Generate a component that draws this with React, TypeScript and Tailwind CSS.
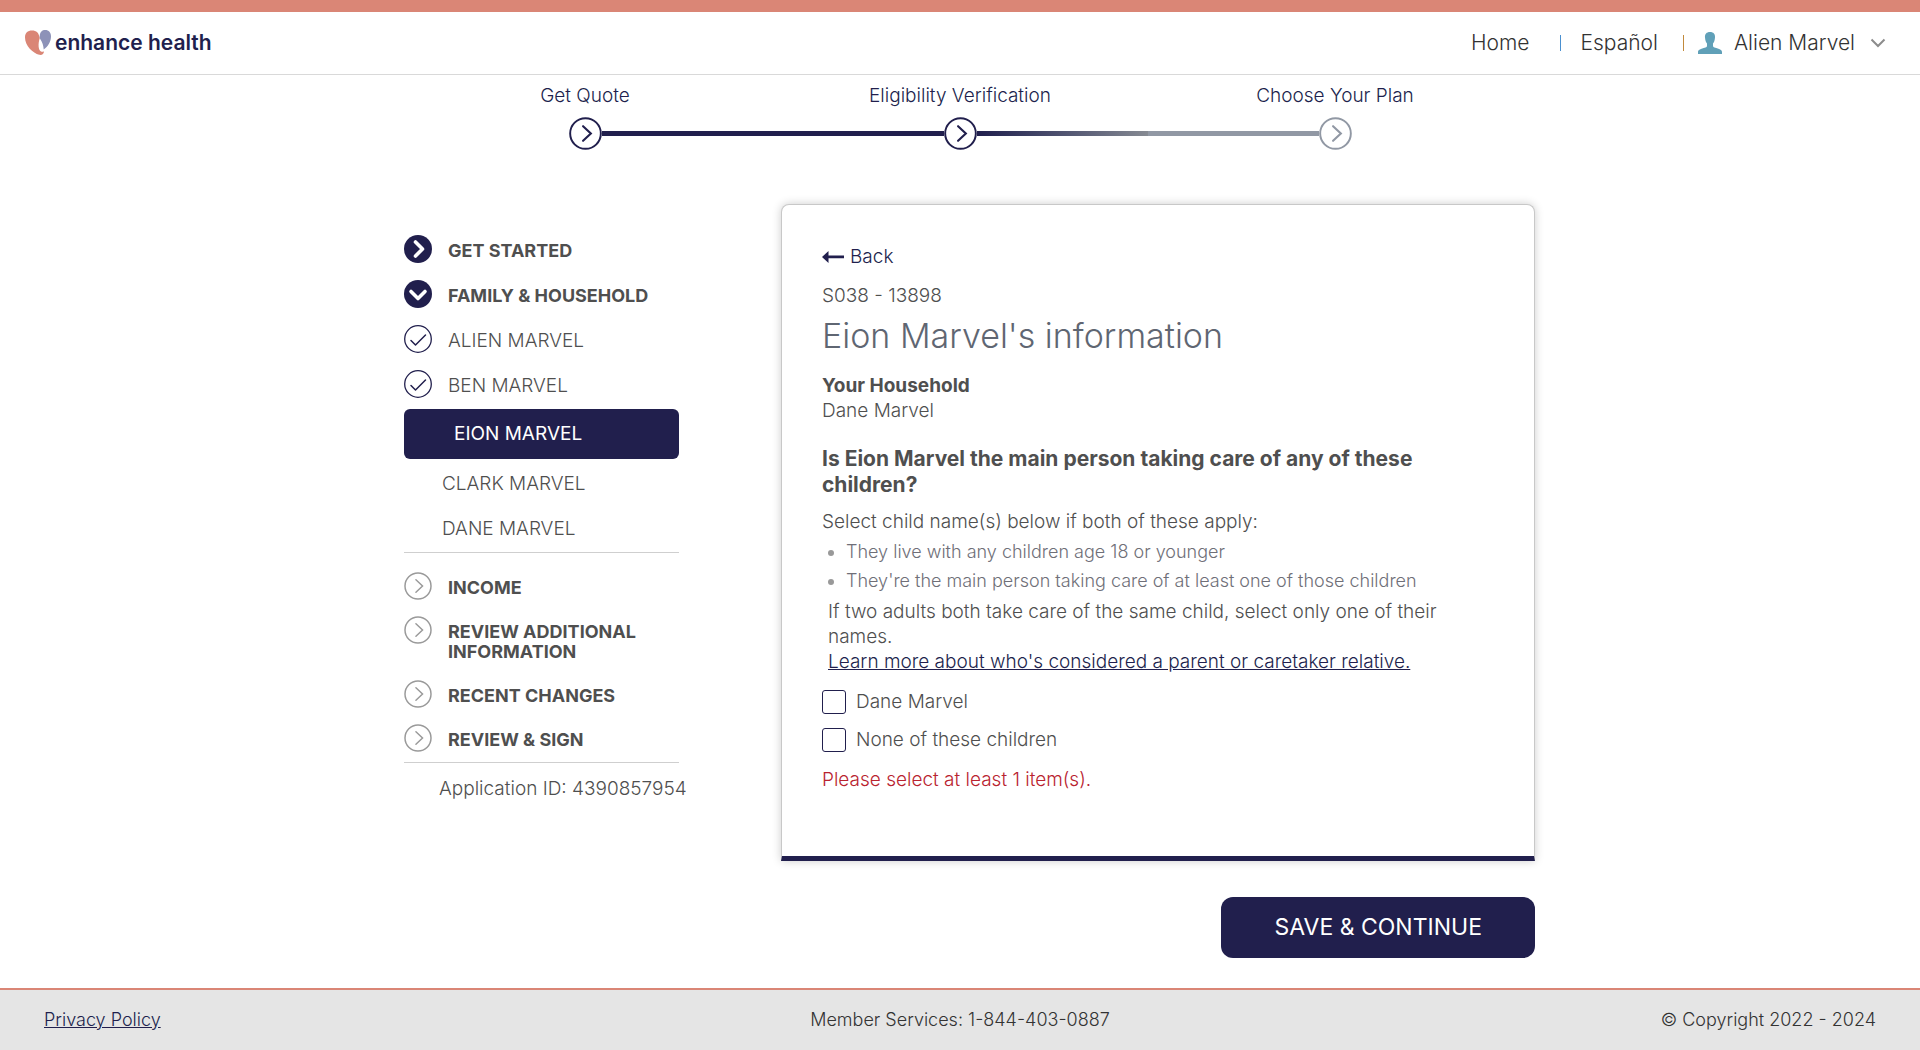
import React from "react";

const NAVY = "#211f4d";

function Logo() {
  return (
    <a href="#home" aria-label="enhance health" className="flex items-center gap-1 text-[#211f4d]">
      <svg width="26" height="26" viewBox="0 0 26 26" aria-hidden="true">
        <path
          d="M7 .6C2.600 .6 0 3 0 7.500c0 8.500 8 15.500 14.200 17.300 2.600.7 4.800-.9 4.800-3.600-.9.700-2 .8-3 .3-2.600-1.300-3.200-7.500-1.200-13.500C13.800 3 11.500.6 7 .6z"
          fill="#da8676"
        />
        <path d="M20.200 0c-3 0-5.200 2-5.400 5.500-.2 1.500 0 2.500.4 3.500 2.200 3.300 3.300 6.600 3.500 10.500C23 16.500 26 11.500 26 6.500 26 2.500 23.800 0 20.200 0z" fill="#8d92b8" />
      </svg>
      <span className="text-[21px] leading-6 font-semibold">enhance health</span>
    </a>
  );
}

function RingChevron({ size, color, bold }: { size: number; color: string; bold?: boolean }) {
  return (
    <svg width={size} height={size} viewBox="0 0 34 34" fill="none" aria-hidden="true" className="shrink-0">
      <circle cx="17" cy="17" r="15.800" stroke={color} strokeWidth={bold ? 2 : 1.800} fill="#fff" />
      <path d="M14.500 9.500l8 7.500-8 7.500" stroke={color} strokeWidth={bold ? 2.200 : 1.800} strokeLinecap="round" />
    </svg>
  );
}

function SolidChevron({ down }: { down?: boolean }) {
  return (
    <svg width="28" height="28" viewBox="0 0 28 28" fill="none" aria-hidden="true" className="shrink-0">
      <circle cx="14" cy="14" r="14" fill={NAVY} />
      <path
        d={down ? "M7 11.500l7 7 7-7" : "M11.500 7l7 7-7 7"}
        stroke="#fff"
        strokeWidth="3.600"
        strokeLinecap="round"
        strokeLinejoin="round"
      />
    </svg>
  );
}

function RingCheck() {
  return (
    <svg width="28" height="28" viewBox="0 0 28 28" fill="none" aria-hidden="true" className="shrink-0">
      <circle cx="14" cy="14" r="13.300" stroke={NAVY} strokeWidth="1.300" />
      <path d="M7 15.500l4.500 4.500L21.500 10" stroke={NAVY} strokeWidth="1.500" strokeLinecap="round" strokeLinejoin="round" />
    </svg>
  );
}

function NavRow({ icon, label, strong }: { icon: React.ReactNode; label: string; strong?: boolean }) {
  return (
    <li>
      <a href="#section" className="flex items-start gap-4 pt-1.5 pb-2.5">
        {icon}
        <span
          className={
            strong
              ? "pt-1.5 pb-0.5 text-lg leading-5 font-bold text-[#4f4f4f]"
              : "pt-1.5 pb-0.5 text-[19px] leading-5 font-light text-[#4f4f4f]"
          }
        >
          {label}
        </span>
      </a>
    </li>
  );
}

const steps = [
  { label: "Get Quote", color: NAVY },
  { label: "Eligibility Verification", color: NAVY },
  { label: "Choose Your Plan", color: "#9198a4" },
];

function Progress() {
  return (
    <nav aria-label="Progress" className="mx-auto grid w-full max-w-[1125px] grid-cols-3 pt-[9px]">
      {steps.map((step, i) => (
        <div key={step.label} className="flex flex-col items-center gap-[9px]">
          <span className="text-[19px] leading-6 font-light text-[#211f4d]">{step.label}</span>
          <div className="flex w-full items-center">
            <div
              className={
                i === 0
                  ? "h-[5px] flex-1"
                  : i === 1
                    ? "h-[5px] flex-1 bg-[#211f4d]"
                    : "h-[5px] flex-1 bg-[#9198a4]"
              }
            />
            <RingChevron size={33} color={step.color} bold />
            <div
              className={
                i === 0
                  ? "h-[5px] flex-1 bg-[#211f4d]"
                  : i === 1
                    ? "h-[5px] flex-1 bg-linear-to-r from-[#211f4d] to-[#868a92]"
                    : "h-[5px] flex-1"
              }
            />
          </div>
        </div>
      ))}
    </nav>
  );
}

function Sidebar() {
  const ring = <RingChevron size={28} color="#9a9a9a" />;
  return (
    <aside className="w-[275px] shrink-0 pt-[25px]">
      <ul className="flex flex-col gap-px">
        <NavRow icon={<SolidChevron />} label="GET STARTED" strong />
        <NavRow icon={<SolidChevron down />} label="FAMILY & HOUSEHOLD" strong />
        <NavRow icon={<RingCheck />} label="ALIEN MARVEL" />
        <NavRow icon={<RingCheck />} label="BEN MARVEL" />
        <li>
          <a href="#eion" className="flex h-[50px] items-center rounded-md bg-[#211f4d] pl-[50px] text-[19px] text-white">
            EION MARVEL
          </a>
        </li>
        <li className="mt-0.5">
          <a href="#clark" className="flex h-11 items-center pl-[38px] text-[19px] font-light text-[#4f4f4f]">
            CLARK MARVEL
          </a>
        </li>
        <li>
          <a href="#dane" className="flex h-11 items-center pl-[38px] text-[19px] font-light text-[#4f4f4f]">
            DANE MARVEL
          </a>
        </li>
      </ul>
      <ul className="mt-px border-y border-[#cfcfcf] pt-[13px]">
        <NavRow icon={ring} label="INCOME" strong />
        <NavRow icon={ring} label="REVIEW ADDITIONAL INFORMATION" strong />
        <NavRow icon={ring} label="RECENT CHANGES" strong />
        <NavRow icon={ring} label="REVIEW & SIGN" strong />
      </ul>
      <p className="pt-3.5 pl-[35px] text-[19px] leading-6 font-light whitespace-nowrap text-[#4f4f4f]">
        Application ID: 4390857954
      </p>
    </aside>
  );
}

function Choice({ id, label }: { id: string; label: string }) {
  return (
    <div className="flex items-center gap-2.5">
      <input
        id={id}
        type="checkbox"
        className="size-6 appearance-none rounded-[3px] border border-[#211f4d] bg-white checked:bg-[#211f4d]"
      />
      <label htmlFor={id} className="leading-6">
        {label}
      </label>
    </div>
  );
}

function Card() {
  return (
    <section className="rounded-t-lg border border-b-[5px] border-[#c8c8c8] border-b-[#211f4d] bg-white px-10 pt-[39px] pb-16 text-[19px] leading-[25px] font-light text-[#4f4f4f] shadow-[0_0_10px_rgba(0,0,0,0.2)]">
      <button type="button" className="flex items-center gap-1.5 text-[#211f4d]">
        <svg width="22" height="12" viewBox="0 0 22 12" aria-hidden="true">
          <path d="M0 6L6.500 0v4.600H22v2.600H6.500V12z" fill={NAVY} />
        </svg>
        Back
      </button>
      <p className="mt-3.5">S038 - 13898</p>
      <h1 className="mt-2 text-[34px] leading-10 font-light text-[#5f6672]">Eion Marvel's information</h1>
      <p className="mt-[17px] font-bold">Your Household</p>
      <p>Dane Marvel</p>
      <h2 id="question" className="mt-[23px] text-[21px] leading-[26px] font-bold">
        Is Eion Marvel the main person taking care of any of these children?
      </h2>
      <p className="mt-[11px]">Select child name(s) below if both of these apply:</p>
      <ul className="mt-[3px] list-disc pl-6 text-lg leading-[29px] text-[#6f6f78] marker:text-[#999]">
        <li>They live with any children age 18 or younger</li>
        <li>They're the main person taking care of at least one of those children</li>
      </ul>
      <div className="mt-1 pl-1.5">
        <p>If two adults both take care of the same child, select only one of their names.</p>
        <a href="#caretaker" className="text-[#211f4d] underline">
          Learn more about who's considered a parent or caretaker relative.
        </a>
      </div>
      <fieldset aria-labelledby="question" className="mt-4 flex flex-col gap-3.5">
        <Choice id="child-dane" label="Dane Marvel" />
        <Choice id="child-none" label="None of these children" />
      </fieldset>
      <p role="alert" className="mt-[15px] text-[#b9232f]">
        Please select at least 1 item(s).
      </p>
    </section>
  );
}

export default function App() {
  return (
    <div className="flex min-h-screen flex-col bg-white font-['Inter',sans-serif]">
      <header className="flex items-center justify-between border-t-12 border-b border-t-[#da8676] border-b-[#d9d9d9] pt-[15px] pr-[34px] pb-[15px] pl-[25px]">
        <Logo />
        <nav className="flex items-center text-[21px] leading-8 font-light text-[#333]">
          <a href="#home">Home</a>
          <span className="mr-5 ml-[30px] h-4 w-px bg-[#4a90d0]" />
          <a href="#es">Español</a>
          <span className="mr-3.5 ml-[25px] h-4 w-px bg-[#c28a3c]" />
          <button type="button" className="flex items-center">
            <svg width="24" height="22" viewBox="0 0 24 22" aria-hidden="true" className="mr-3">
              <path
                d="M12 0c3.500 0 5.300 2.200 5 5.500-.2 3-1 4.700-2 6v2.200c0 1 .5 1.400 1.500 1.700C21.500 16.800 24 17.500 24 20v2H0v-2c0-2.500 2.500-3.200 7.500-4.600 1-.3 1.500-.7 1.500-1.700v-2.200c-1-1.300-1.800-3-2-6C6.700 2.200 8.500 0 12 0z"
                fill="#60a0b8"
              />
            </svg>
            Alien Marvel
            <svg width="16" height="10" viewBox="0 0 16 10" fill="none" aria-hidden="true" className="ml-[15px]">
              <path d="M1.500 1.500L8 8l6.500-6.500" stroke="#8c8c8c" strokeWidth="2" />
            </svg>
          </button>
        </nav>
      </header>
      <Progress />
      <main className="mx-auto flex w-full max-w-[1170px] items-start justify-between pt-[54px] pr-2.5 pb-[30px] pl-[29px]">
        <Sidebar />
        <div className="flex w-2/3 flex-col">
          <Card />
          <button
            type="button"
            className="mt-9 self-end rounded-xl bg-[#211f4d] px-[53px] py-4 text-[23px] leading-[29px] text-white"
          >
            SAVE &amp; CONTINUE
          </button>
        </div>
      </main>
      <footer className="mt-auto grid grid-cols-3 border-t-2 border-[#da8676] bg-[#e5e5e5] px-11 py-[18px] text-lg leading-6 font-light text-[#333]">
        <a href="#privacy" className="justify-self-start text-[#211f4d] underline">
          Privacy Policy
        </a>
        <span className="text-center">Member Services: 1-844-403-0887</span>
        <span className="text-right">© Copyright 2022 - 2024</span>
      </footer>
    </div>
  );
}
